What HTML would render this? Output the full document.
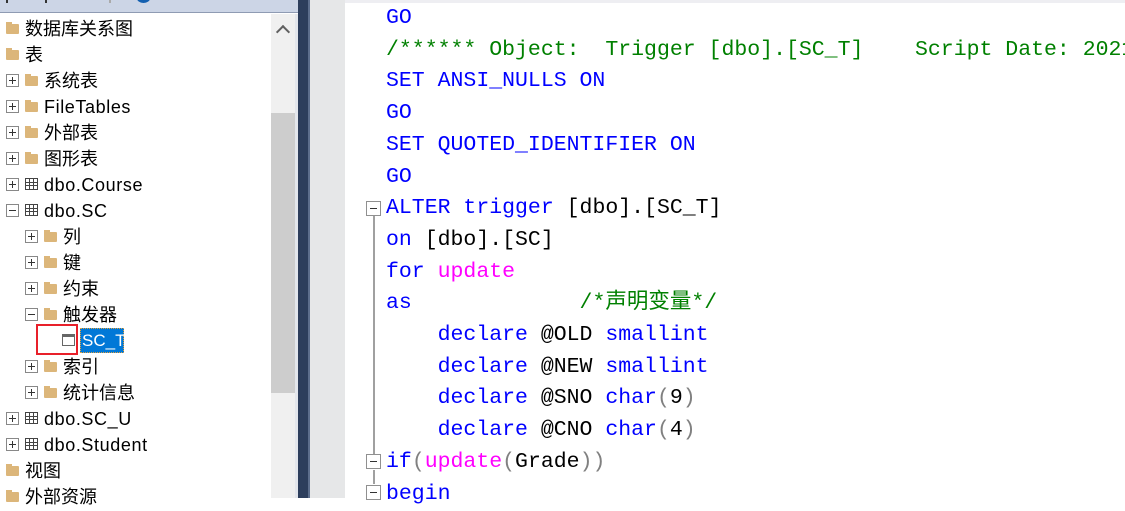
<!DOCTYPE html>
<html><head><meta charset="utf-8"><style>
*{margin:0;padding:0;box-sizing:border-box}
body{width:1125px;height:498px;overflow:hidden;background:#fff;position:relative;font-family:"Liberation Sans","Noto Sans CJK SC",sans-serif}
.abs{position:absolute}
.row{position:absolute;height:26px;line-height:28px;font-size:18px;color:#000;white-space:nowrap}
.l{letter-spacing:0.6px}
.pb{position:absolute;width:13px;height:13px;border:1px solid #888;background:#fff}
.pb::before{content:"";position:absolute;left:2px;top:5px;width:7px;height:1px;background:#333}
.pb.p::after{content:"";position:absolute;left:5px;top:2px;width:1px;height:7px;background:#333}
.fd{position:absolute;width:13px;height:10px;background:#dcb67a;border-radius:1px}
.fd::before{content:"";position:absolute;left:0;top:-2px;width:6px;height:3px;background:#dcb67a}
.tb{position:absolute;width:13px;height:12px;border:1px solid #444;background:
linear-gradient(#444,#444) 0 3px/100% 1px no-repeat,
linear-gradient(#444,#444) 0 6px/100% 1px no-repeat,
linear-gradient(90deg,#444,#444) 3px 0/1px 100% no-repeat,
linear-gradient(90deg,#444,#444) 7px 0/1px 100% no-repeat,#fff}
.code{position:absolute;left:386px;top:3px;font-family:"Liberation Mono","Noto Sans CJK SC",monospace;font-size:21.5px;line-height:31.7px;white-space:pre;color:#0000ff}
.g{color:#008000}.m{color:#ff00ff}.k{color:#000}.gr{color:#808080}
.cb{position:absolute;left:366px;width:15px;height:15px;border:1px solid #909090;background:#fff}
.cb::before{content:"";position:absolute;left:3px;top:6px;width:7px;height:1px;background:#333}
</style></head><body>
<div class="abs" style="left:0;top:0;width:298px;height:13px;background:#ccd5e6;border-bottom:1px solid #8f9bb3"></div>
<div class="abs" style="left:6px;top:0;width:2px;height:3px;background:#333"></div>
<div class="abs" style="left:45px;top:0;width:2px;height:3px;background:#333"></div>
<div class="abs" style="left:109px;top:0;width:2px;height:3px;background:#aaa"></div>
<div class="abs" style="left:137px;top:-6px;width:13px;height:9px;border-radius:50%;border:3px solid #1460b0"></div>
<div class="abs" style="left:271px;top:14px;width:24px;height:484px;background:#f0f0f0"></div>
<div class="abs" style="left:271px;top:113px;width:24px;height:280px;background:#cdcdcd"></div>
<div class="abs" style="left:278px;top:27px;width:10px;height:10px;border-left:2px solid #606060;border-top:2px solid #606060;transform:rotate(45deg)"></div>
<div class="abs" style="left:295px;top:14px;width:3px;height:484px;background:#e3e6ec"></div>
<div class="abs" style="left:298px;top:0;width:10px;height:498px;background:#2d3e5c"></div>
<div class="abs" style="left:308px;top:0;width:2px;height:498px;background:#5d6e8c"></div>
<div class="abs" style="left:310px;top:0;width:35px;height:498px;background:#e6e7e8"></div>
<div class="abs" style="left:345px;top:0;width:780px;height:3px;background:#eeeef2"></div>

<div class="fd" style="left:6px;top:24px"></div><div class="row" style="left:25px;top:15px">数据库关系图</div>
<div class="fd" style="left:6px;top:50px"></div><div class="row" style="left:25px;top:41px">表</div>

<div class="pb p" style="left:6px;top:74px"></div><div class="fd" style="left:25px;top:76px"></div><div class="row" style="left:44px;top:67px">系统表</div>
<div class="pb p" style="left:6px;top:100px"></div><div class="fd" style="left:25px;top:102px"></div><div class="row l" style="left:44px;top:93px">FileTables</div>
<div class="pb p" style="left:6px;top:126px"></div><div class="fd" style="left:25px;top:128px"></div><div class="row" style="left:44px;top:119px">外部表</div>
<div class="pb p" style="left:6px;top:152px"></div><div class="fd" style="left:25px;top:154px"></div><div class="row" style="left:44px;top:145px">图形表</div>
<div class="pb p" style="left:6px;top:178px"></div><div class="tb" style="left:25px;top:178px"></div><div class="row l" style="left:44px;top:171px">dbo.Course</div>
<div class="pb" style="left:6px;top:204px"></div><div class="tb" style="left:25px;top:204px"></div><div class="row l" style="left:44px;top:197px">dbo.SC</div>

<div class="pb p" style="left:25px;top:230px"></div><div class="fd" style="left:44px;top:232px"></div><div class="row" style="left:63px;top:223px">列</div>
<div class="pb p" style="left:25px;top:256px"></div><div class="fd" style="left:44px;top:258px"></div><div class="row" style="left:63px;top:249px">键</div>
<div class="pb p" style="left:25px;top:282px"></div><div class="fd" style="left:44px;top:284px"></div><div class="row" style="left:63px;top:275px">约束</div>
<div class="pb" style="left:25px;top:308px"></div><div class="fd" style="left:44px;top:310px"></div><div class="row" style="left:63px;top:301px">触发器</div>
<div class="abs" style="left:62px;top:334px;width:13px;height:12px;border:1px solid #666;border-top-width:3px;background:#fff"></div>
<div class="abs" style="left:80px;top:328px;width:44px;height:25px;background:#0078d7;border:1px dotted #e0a040"></div>
<div class="row" style="left:82px;top:327px;color:#fff;font-size:17px">SC_T</div>
<div class="abs" style="left:36px;top:324px;width:42px;height:31px;border:2px solid #e8202a"></div>
<div class="pb p" style="left:25px;top:360px"></div><div class="fd" style="left:44px;top:362px"></div><div class="row" style="left:63px;top:353px">索引</div>
<div class="pb p" style="left:25px;top:386px"></div><div class="fd" style="left:44px;top:388px"></div><div class="row" style="left:63px;top:379px">统计信息</div>

<div class="pb p" style="left:6px;top:412px"></div><div class="tb" style="left:25px;top:412px"></div><div class="row l" style="left:44px;top:405px">dbo.SC_U</div>
<div class="pb p" style="left:6px;top:438px"></div><div class="tb" style="left:25px;top:438px"></div><div class="row l" style="left:44px;top:431px">dbo.Student</div>
<div class="fd" style="left:6px;top:466px"></div><div class="row" style="left:25px;top:457px">视图</div>
<div class="fd" style="left:6px;top:492px"></div><div class="row" style="left:25px;top:483px">外部资源</div>

<div class="abs" style="left:373px;top:216px;width:2px;height:238px;background:#a0a0a0"></div>
<div class="abs" style="left:373px;top:470px;width:2px;height:14px;background:#a0a0a0"></div>
<div class="cb" style="left:366px;top:201px"></div>
<div class="cb" style="left:366px;top:454px"></div>
<div class="cb" style="left:366px;top:485px"></div>
<div class="code">GO
<span class="g">/****** Object:  Trigger [dbo].[SC_T]    Script Date: 2021</span>
SET ANSI_NULLS ON
GO
SET QUOTED_IDENTIFIER ON
GO
ALTER trigger <span class="k">[dbo].[SC_T]</span>
on <span class="k">[dbo].[SC]</span>
for <span class="m">update</span>
as             <span class="g">/*声明变量*/</span>
    declare <span class="k">@OLD</span> smallint
    declare <span class="k">@NEW</span> smallint
    declare <span class="k">@SNO</span> char<span class="gr">(</span><span class="k">9</span><span class="gr">)</span>
    declare <span class="k">@CNO</span> char<span class="gr">(</span><span class="k">4</span><span class="gr">)</span>
if<span class="gr">(</span><span class="m">update</span><span class="gr">(</span><span class="k">Grade</span><span class="gr">))</span>
begin</div>
</body></html>
